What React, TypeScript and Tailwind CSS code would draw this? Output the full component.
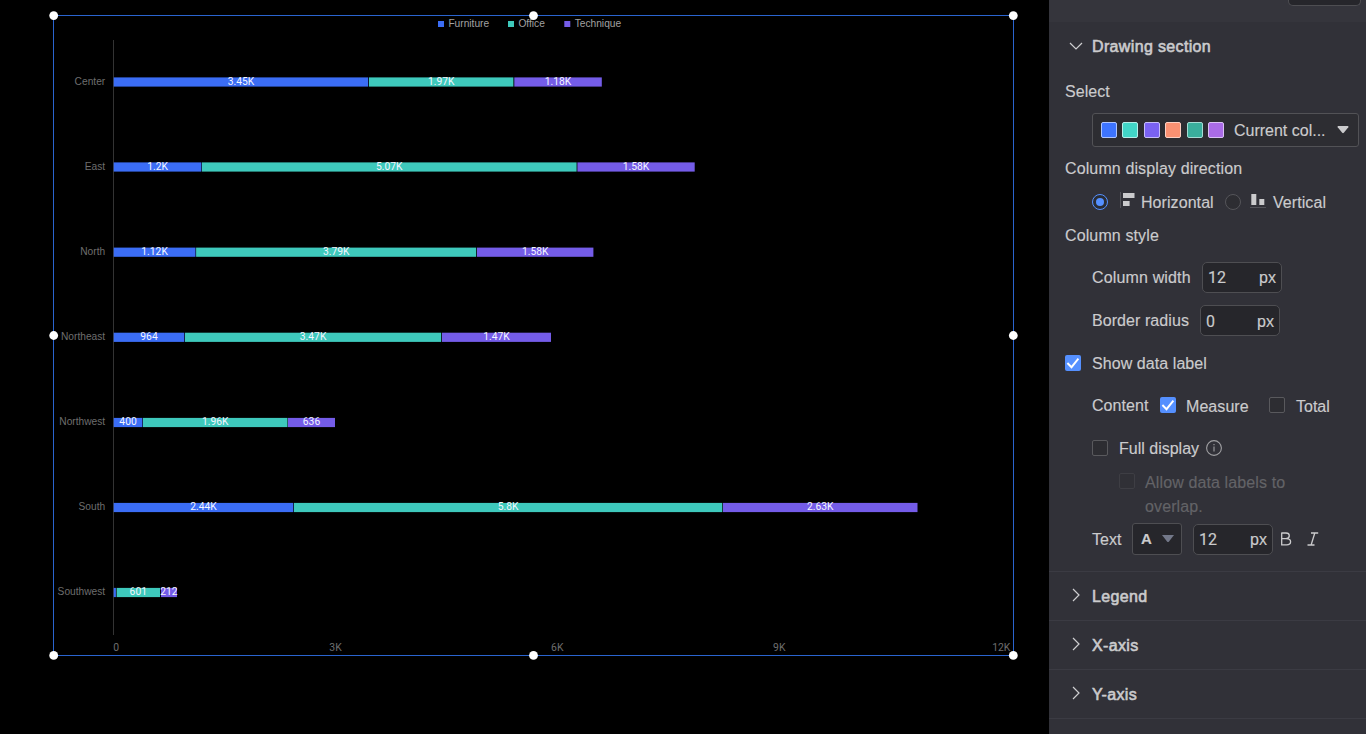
import React from "react";

type Segment = { x: number; w: number; label: string };
type Row = { name: string; y: number; segments: Segment[] };

const SERIES = [
  { name: "Furniture", color: "#3b6df5", x: 438 },
  { name: "Office", color: "#3ec9bc", x: 508 },
  { name: "Technique", color: "#745ce8", x: 564.3 },
];

const ROWS: Row[] = [
  { name: "Center", y: 77.4, segments: [{ x: 113.7, w: 254.5, label: "3.45K" }, { x: 369, w: 144.4, label: "1.97K" }, { x: 514.3, w: 87.5, label: "1.18K" }] },
  { name: "East", y: 162.4, segments: [{ x: 113.7, w: 87.7, label: "1.2K" }, { x: 202, w: 374.6, label: "5.07K" }, { x: 577.4, w: 117.3, label: "1.58K" }] },
  { name: "North", y: 247.6, segments: [{ x: 113.7, w: 81.8, label: "1.12K" }, { x: 196.1, w: 280.1, label: "3.79K" }, { x: 477, w: 116.4, label: "1.58K" }] },
  { name: "Northeast", y: 332.7, segments: [{ x: 113.7, w: 70.6, label: "964" }, { x: 185, w: 256.2, label: "3.47K" }, { x: 442, w: 109, label: "1.47K" }] },
  { name: "Northwest", y: 417.9, segments: [{ x: 113.7, w: 28.7, label: "400" }, { x: 143, w: 144.5, label: "1.96K" }, { x: 288, w: 47, label: "636" }] },
  { name: "South", y: 502.9, segments: [{ x: 113.7, w: 179.6, label: "2.44K" }, { x: 294, w: 428.3, label: "5.8K" }, { x: 723, w: 194.5, label: "2.63K" }] },
  { name: "Southwest", y: 587.9, segments: [{ x: 113.7, w: 2.2, label: "" }, { x: 116.6, w: 43.4, label: "601" }, { x: 160.9, w: 16.1, label: "212" }] },
];

const TICKS = [
  { x: 116.2, label: "0" },
  { x: 335.5, label: "3K" },
  { x: 557.3, label: "6K" },
  { x: 779.3, label: "9K" },
  { x: 1001.3, label: "12K" },
];

const HANDLES = [
  [53.7, 15.6], [533.5, 15.6], [1013.3, 15.6],
  [53.7, 335.5], [1013.3, 335.5],
  [53.7, 655.4], [533.5, 655.4], [1013.3, 655.4],
];

function Chart() {
  return (
    <svg className="block h-[734px] w-[1049px] shrink-0 bg-black" viewBox="0 0 1049 734">
      <rect x="53.5" y="15.5" width="960" height="640" fill="none" stroke="#2a64cf" strokeWidth="1" />
      {SERIES.map((s) => (
        <g key={s.name}>
          <rect x={s.x} y="21" width="6" height="6" fill={s.color} />
          <text x={s.x + 10.4} y="27" className="fill-[#a2a2a2] font-['Liberation_Sans',sans-serif] text-[10.2px]">{s.name}</text>
        </g>
      ))}
      <rect x="113" y="40" width="1" height="595" fill="#333333" />
      {ROWS.map((row) => (
        <g key={row.name}>
          <text x="105.2" y={Math.floor(row.y) + 8} textAnchor="end" className="fill-[#6e6e6e] font-['Liberation_Sans',sans-serif] text-[10.2px]">{row.name}</text>
          {row.segments.map((seg, i) => (
            <g key={i}>
              <rect x={seg.x} y={row.y} width={seg.w} height="9.2" fill={SERIES[i].color} />
              <text x={seg.x + seg.w / 2} y={Math.floor(row.y) + 8} textAnchor="middle" className="fill-[#f4f6ff] font-[Roboto,sans-serif] text-[10.3px]">{seg.label}</text>
            </g>
          ))}
        </g>
      ))}
      {TICKS.map((t) => (
        <text key={t.label} x={t.x} y="651" textAnchor="middle" className="fill-[#6e6e6e] font-[Roboto,sans-serif] text-[10.4px]">{t.label}</text>
      ))}
      {HANDLES.map(([x, y], i) => (
        <circle key={i} cx={x} cy={y} r="4.4" fill="#ffffff" />
      ))}
    </svg>
  );
}

function Check({ checked = false, dim = false }: { checked?: boolean; dim?: boolean }) {
  if (checked) {
    return (
      <span className="block h-4 w-4 shrink-0 rounded-[2px] bg-[#5590ff]">
        <svg viewBox="0 0 16 16" className="block h-4 w-4" fill="none" stroke="#fff" strokeWidth="1.9">
          <path d="M2.4 8 6.5 12.2 13.4 3.6" />
        </svg>
      </span>
    );
  }
  return (
    <span className={dim ? "block h-4 w-4 shrink-0 rounded-[2px] border border-[#3e3e44] bg-[#303036]" : "block h-4 w-4 shrink-0 rounded-[2px] border border-[#59595d] bg-[#2d2d32]"} />
  );
}

function PxInput({ value }: { value: string }) {
  return (
    <div className="flex h-[31px] w-20 items-center justify-between rounded-[5px] border border-[#4e4e52] bg-[#26262b] pr-[5px] pl-[5px]">
      <span className="pt-0.5 font-[Roboto,sans-serif]">{value}</span>
      <span className="pt-0.5">px</span>
    </div>
  );
}

function Title({ children }: { children: string }) {
  return (
    <span className="pt-0.5 tracking-[0.35px] [-webkit-text-stroke:0.6px_#cbcbcd]">{children}</span>
  );
}

function Section({ title }: { title: string }) {
  return (
    <div className="flex h-[49px] items-center border-t border-[#3b3b43] pl-[19px]">
      <svg viewBox="0 0 16 16" className="-mt-0.5 mr-2 h-4 w-4" fill="none" stroke="#cfcfd1" strokeWidth="1.2">
        <path d="M5 2 11 8 5 14" />
      </svg>
      <Title>{title}</Title>
    </div>
  );
}

const SWATCHES = [
  "bg-[#3d74ff] border-[#adc4ff]",
  "bg-[#41d6c7] border-[#b3efe9]",
  "bg-[#7a62f3] border-[#c6bcfa]",
  "bg-[#fb9172] border-[#fdd0c3]",
  "bg-[#3aae9c] border-[#a5dcd4]",
  "bg-[#aa6be6] border-[#dac0f5]",
];

export default function App() {
  return (
    <div className="flex h-[734px] w-[1366px] overflow-hidden bg-black">
      <Chart />
      <aside className="flex h-[734px] w-[317px] flex-col overflow-hidden bg-[#313138] font-['Liberation_Sans',Arial,sans-serif] text-base leading-6 tracking-[0.07px] whitespace-nowrap text-[#cbcbcd] [-webkit-text-stroke:0.15px]">
        <div className="flex h-[22px] shrink-0 justify-end bg-[#35353c] pr-[5px]">
          <div className="h-1.5 w-[73px] rounded-b-[5px] border border-t-0 border-[#4e4e52] bg-[#26262b]" />
        </div>
        <div className="flex h-12 shrink-0 items-center pl-[19px]">
          <svg viewBox="0 0 16 16" className="mr-2 h-4 w-4" fill="none" stroke="#cfcfd1" strokeWidth="1.2">
            <path d="M2 5 8 11 14 5" />
          </svg>
          <Title>Drawing section</Title>
        </div>
        <div className="flex h-[43px] shrink-0 items-center pl-4">Select</div>
        <div className="mr-[7px] ml-[43px] flex h-[34px] shrink-0 items-center rounded-[3px] border border-[#525256] bg-[#2d2d32] pl-2">
          <div className="flex gap-[5.4px]">
            {SWATCHES.map((s) => (
              <span key={s} className={`block h-4 w-4 rounded-[2px] border ${s}`} />
            ))}
          </div>
          <span className="ml-[10px] pt-0.5 tracking-normal">Current col...</span>
          <svg viewBox="0 0 12 8" className="mr-[9px] ml-auto h-2 w-3" fill="#cbcbcd">
            <path d="M1.2 0h9.6q1.2.2.5 1.2L6.8 6.8q-.8.8-1.6 0L.7 1.2Q0 .2 1.2 0Z" />
          </svg>
        </div>
        <div className="flex h-[42px] shrink-0 items-center pt-0.5 pl-4 tracking-[0.12px]">Column display direction</div>
        <div className="flex h-[26px] shrink-0 items-center pl-[43px]">
          <span className="flex h-4 w-4 shrink-0 items-center justify-center rounded-full border border-[#5590ff] bg-[#2a2d34]">
            <span className="h-2 w-2 rounded-full bg-[#5590ff]" />
          </span>
          <svg viewBox="0 0 16 16" className="-mt-1 ml-3 h-4 w-4">
            <rect x="0" y="0" width="1" height="16" fill="#54545a" />
            <rect x="3" y="1" width="11.5" height="5" fill="#cbcbcd" />
            <rect x="3" y="9" width="6.6" height="5" fill="#cbcbcd" />
          </svg>
          <span className="w-[89px] pt-0.5 pl-[5px]">Horizontal</span>
          <span className="h-4 w-4 shrink-0 rounded-full border border-[#55555a] bg-[#2d2d32]" />
          <svg viewBox="0 0 16 16" className="-mt-1 ml-[9px] h-4 w-4">
            <rect x="1.3" y="2" width="5" height="11" fill="#cbcbcd" />
            <rect x="9.3" y="7" width="5" height="6" fill="#cbcbcd" />
            <rect x="0" y="15" width="16" height="1" fill="#54545a" />
          </svg>
          <span className="pt-0.5 pl-[7px]">Vertical</span>
        </div>
        <div className="flex h-10 shrink-0 items-center pt-0.5 pl-4 tracking-[0.12px]">Column style</div>
        <div className="flex h-11 shrink-0 items-center pl-[43px]">
          <span className="w-[110px] pt-0.5 tracking-[0.15px]">Column width</span>
          <PxInput value="12" />
        </div>
        <div className="flex h-[43px] shrink-0 items-center pl-[43px]">
          <span className="w-[108px]">Border radius</span>
          <PxInput value="0" />
        </div>
        <div className="flex h-[42px] shrink-0 items-center gap-[11px] pl-4">
          <Check checked />
          <span className="pt-0.5">Show data label</span>
        </div>
        <div className="flex h-[43px] shrink-0 items-center pl-[43px]">
          <span className="w-[68px]">Content</span>
          <span className="pb-px"><Check checked /></span>
          <span className="w-[93px] pt-0.5 pl-[10px]">Measure</span>
          <span className="pb-px"><Check /></span>
          <span className="pt-0.5 pl-[11px] tracking-normal">Total</span>
        </div>
        <div className="flex h-[43px] shrink-0 items-center pl-[43px]">
          <span className="pb-px"><Check /></span>
          <span className="w-[98px] pl-[11px] tracking-normal">Full display</span>
          <svg viewBox="0 0 16 16" className="-mt-px h-4 w-4" fill="none" stroke="#a0a0a3" strokeWidth="1.1">
            <circle cx="8" cy="8" r="7.4" />
            <path d="M8 6.6v5M8 4v1.2" />
          </svg>
        </div>
        <div className="flex h-12 shrink-0 gap-[10px] pl-[70px] text-[#636367]">
          <span className="pt-[3px]"><Check dim /></span>
          <span className="pt-px tracking-[0.12px]">Allow data labels to<br />overlap.</span>
        </div>
        <div className="flex h-[42px] shrink-0 items-center pl-[43px]">
          <span className="w-10 pt-0.5">Text</span>
          <div className="flex h-8 w-[50px] items-center rounded-[3px] border border-[#4e4e52] bg-[#26262b] pl-2">
            <span className="text-[15px] font-bold">A</span>
            <svg viewBox="0 0 12 8" className="ml-[10px] h-2 w-3" fill="#737889">
              <path d="M0 0h12L7 6.4q-1 1-2 0Z" />
            </svg>
          </div>
          <span className="w-[11px]" />
          <PxInput value="12" />
          <svg viewBox="0 0 12 14" className="ml-[7px] h-[14px] w-3" fill="none" stroke="#cbcbcd" strokeWidth="1.3">
            <path d="M1.7 1H6Q9.3 1 9.3 3.8 9.3 6.6 6 6.6H1.7M1.7 .4V12.8H6.6Q10.6 12.8 10.6 9.7 10.6 6.6 6 6.6" />
          </svg>
          <svg viewBox="0 0 12 14" className="ml-[15px] h-[14px] w-3" fill="none" stroke="#cbcbcd" strokeWidth="1.3">
            <path d="M4 1H11.2M.5 13H7.5M7.8 1 4.1 13" />
          </svg>
        </div>
        <div className="h-[11px] shrink-0" />
        <Section title="Legend" />
        <Section title="X-axis" />
        <Section title="Y-axis" />
        <div className="border-t border-[#3b3b43]" />
      </aside>
    </div>
  );
}
